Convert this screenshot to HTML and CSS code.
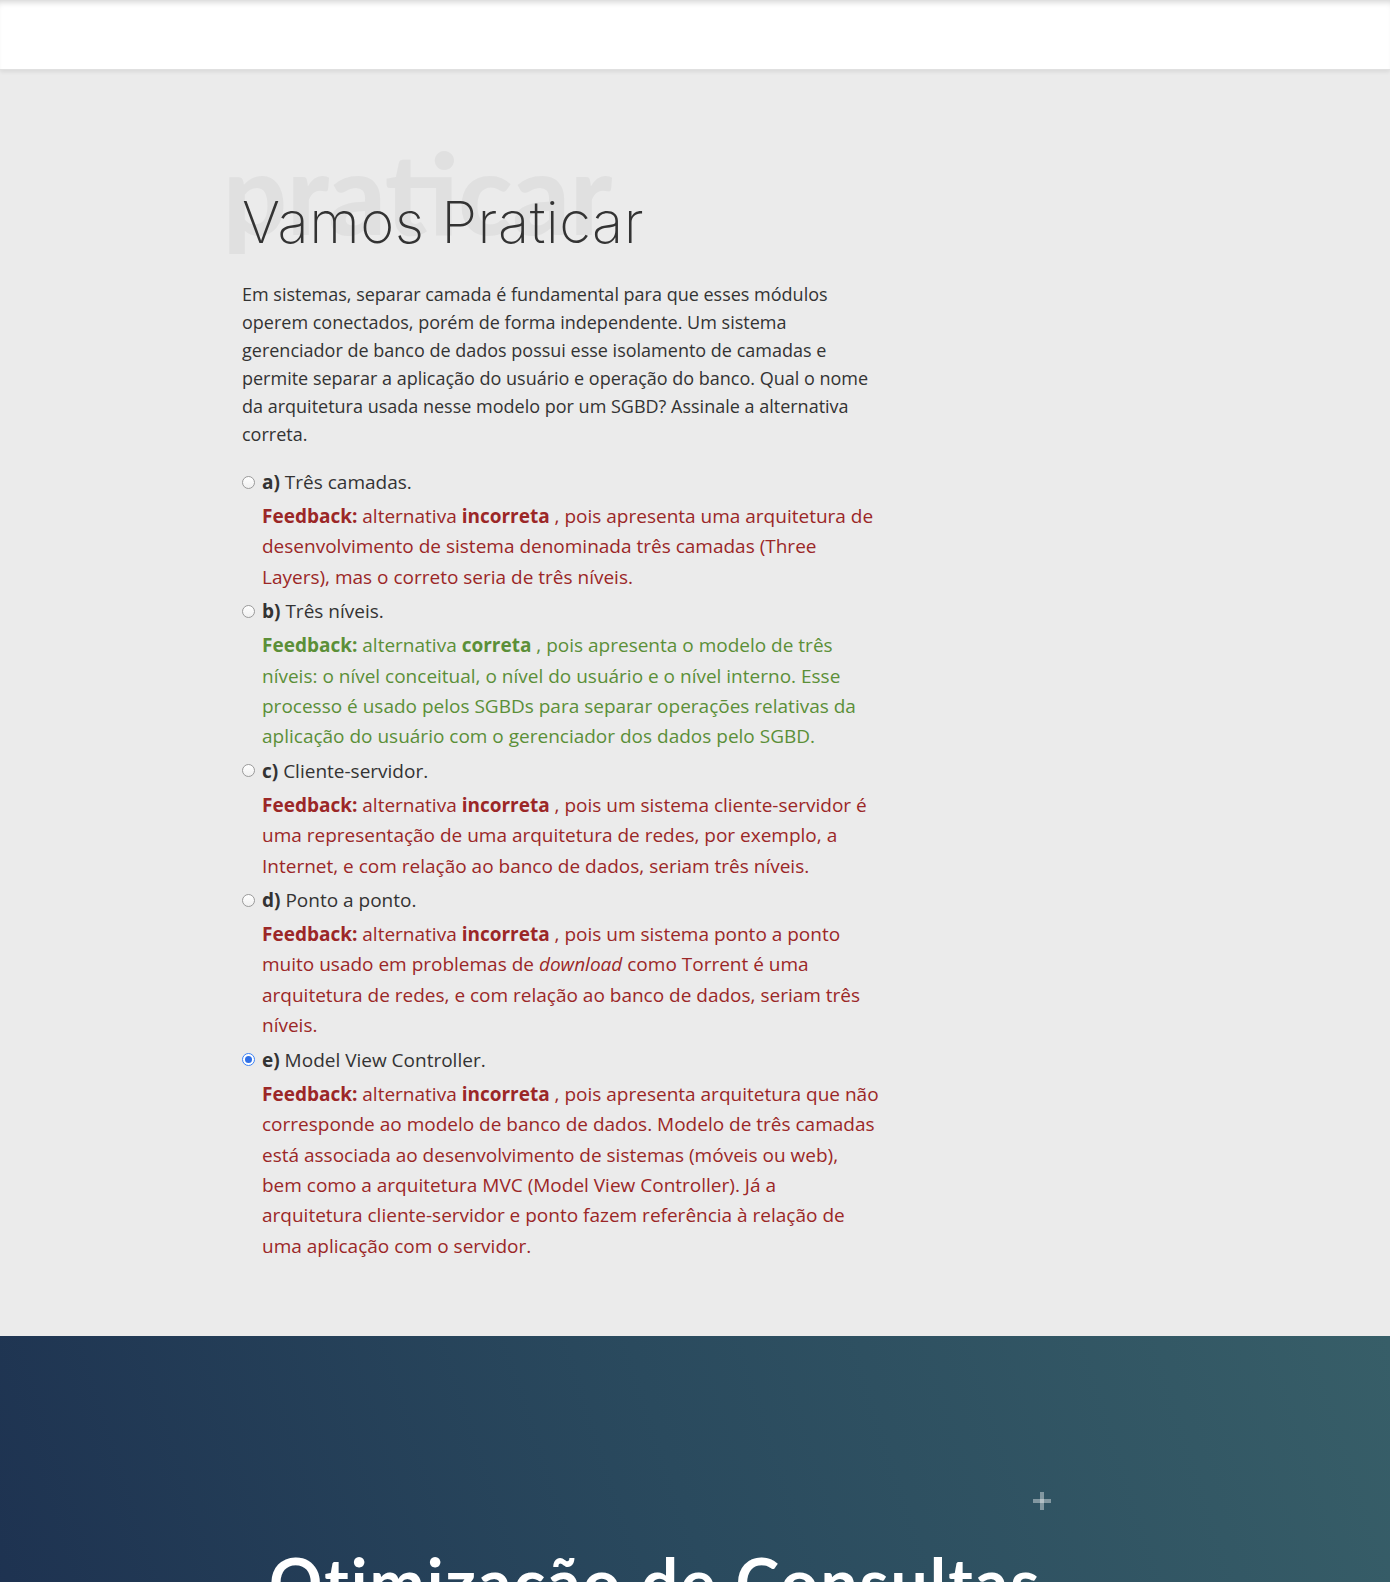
FILE: index.html
```html
<!DOCTYPE html>
<html lang="pt-BR">
<head>
<meta charset="utf-8">
<title>Vamos Praticar</title>
<link rel="stylesheet" href="styles.css">
</head>
<body>
<header class="topbar"></header>
<section class="practice">
  <div class="container">
    <div class="title-wrap">
      <span class="watermark" aria-hidden="true">praticar</span>
      <h2 class="title">Vamos Praticar</h2>
    </div>
    <p class="question">Em sistemas, separar camada é fundamental para que esses módulos operem conectados, porém de forma independente. Um sistema gerenciador de banco de dados possui esse isolamento de camadas e permite separar a aplicação do usuário e operação do banco. Qual o nome da arquitetura usada nesse modelo por um SGBD? Assinale a alternativa correta.</p>
    <ul class="options">
      <li class="option">
        <div class="option-line"><span class="radio"></span><span><b>a)</b> Três camadas.</span></div>
        <p class="feedback wrong"><b>Feedback:</b> alternativa <b>incorreta</b> , pois apresenta uma arquitetura de desenvolvimento de sistema denominada três camadas (Three Layers), mas o correto seria de três níveis.</p>
      </li>
      <li class="option">
        <div class="option-line"><span class="radio"></span><span><b>b)</b> Três níveis.</span></div>
        <p class="feedback right"><b>Feedback:</b> alternativa <b>correta</b> , pois apresenta o modelo de três níveis: o nível conceitual, o nível do usuário e o nível interno. Esse processo é usado pelos SGBDs para separar operações relativas da aplicação do usuário com o gerenciador dos dados pelo SGBD.</p>
      </li>
      <li class="option">
        <div class="option-line"><span class="radio"></span><span><b>c)</b> Cliente-servidor.</span></div>
        <p class="feedback wrong"><b>Feedback:</b> alternativa <b>incorreta</b> , pois um sistema cliente-servidor é uma representação de uma arquitetura de redes, por exemplo, a Internet, e com relação ao banco de dados, seriam três níveis.</p>
      </li>
      <li class="option">
        <div class="option-line"><span class="radio"></span><span><b>d)</b> Ponto a ponto.</span></div>
        <p class="feedback wrong"><b>Feedback:</b> alternativa <b>incorreta</b> , pois um sistema ponto a ponto muito usado em problemas de <i>download</i> como Torrent é uma arquitetura de redes, e com relação ao banco de dados, seriam três níveis.</p>
      </li>
      <li class="option">
        <div class="option-line"><span class="radio checked"></span><span><b>e)</b> Model View Controller.</span></div>
        <p class="feedback wrong"><b>Feedback:</b> alternativa <b>incorreta</b> , pois apresenta arquitetura que não corresponde ao modelo de banco de dados. Modelo de três camadas está associada ao desenvolvimento de sistemas (móveis ou web), bem como a arquitetura MVC (Model View Controller). Já a arquitetura cliente-servidor e ponto fazem referência à relação de uma aplicação com o servidor.</p>
      </li>
    </ul>
  </div>
</section>
<section class="next">
  <div class="next-inner">
    <span class="plus" aria-hidden="true"></span>
    <h2 class="next-title">Otimização de Consultas</h2>
  </div>
</section>
</body>
</html>
```
FILE: styles.css
```css
* { box-sizing: border-box; }
html, body { margin: 0; padding: 0; }
body {
  font-family: "Open Sans", "Liberation Sans", sans-serif;
  color: #333;
  background: #ebebeb;
}
.topbar {
  height: 70px;
  background: #fff;
  box-shadow: inset 0 6px 6px -4px rgba(0,0,0,0.18), 0 2px 4px rgba(0,0,0,0.08);
  border-bottom: 1px solid #e0e0e0;
  position: relative;
  z-index: 1;
}
.practice {
  background: #ebebeb;
  padding: 112px 0 70px;
}
.container {
  width: 906px;
  margin: 0 auto;
}
.title-wrap {
  position: relative;
  height: 80px;
  margin-bottom: 18px;
}
.watermark {
  position: absolute;
  left: -19px;
  top: -46px;
  font-family: "Lato", "Open Sans", sans-serif;
  font-weight: 900;
  font-size: 112px;
  line-height: 1;
  color: #e0e0e0;
  white-space: nowrap;
}
.title {
  position: relative;
  margin: 0;
  font-family: "Inter", "Lato", sans-serif;
  font-weight: 200;
  font-size: 58px;
  line-height: 80px;
  color: #333;
  letter-spacing: 0.5px;
}
.question {
  width: 640px;
  margin: 0 0 20px;
  font-size: 18px;
  line-height: 28px;
}
.options {
  list-style: none;
  margin: 0;
  padding: 0;
  width: 637.5px;
}
.option-line {
  display: flex;
  align-items: center;
  gap: 7px;
  font-size: 19px;
  line-height: 28px;
}
.option-line b { font-weight: 700; }
.radio {
  width: 13px;
  height: 13px;
  border-radius: 50%;
  border: 1px solid #9a9a9a;
  background: linear-gradient(#fff, #f0f0f0);
  flex: none;
  position: relative;
}
.radio.checked {
  border: 1px solid #3b82f6;
  background: #fff;
}
.radio.checked::after {
  content: "";
  position: absolute;
  left: 2px;
  top: 2px;
  width: 7px;
  height: 7px;
  border-radius: 50%;
  background: #2f6fe6;
}
.feedback {
  margin: 5px 0 5px 20px;
  font-size: 19px;
  line-height: 30.4px;
}
.feedback.wrong { color: #9b2727; }
.feedback.right { color: #5b8f38; }
.next {
  height: 400px;
  background: linear-gradient(72deg, #1d3150 0%, #2a4a5e 50%, #375e68 100%);
  overflow: hidden;
}
.next-inner {
  width: 906px;
  margin: 0 auto;
  padding-top: 156px;
  position: relative;
}
.plus {
  position: absolute;
  left: 791px;
  top: 156px;
  width: 18px;
  height: 18px;
}
.plus::before, .plus::after {
  content: "";
  position: absolute;
  background: rgba(255,255,255,0.4);
}
.plus::before { left: 7px; top: 0; width: 4px; height: 18px; }
.plus::after { left: 0; top: 7px; width: 18px; height: 4px; }
.next-title {
  margin: 57px 0 0 27px;
  font-family: "Lato", "Open Sans", sans-serif;
  font-weight: 700;
  font-size: 66px;
  letter-spacing: 2px;
  line-height: 1;
  color: #fff;
  white-space: nowrap;
}
```
